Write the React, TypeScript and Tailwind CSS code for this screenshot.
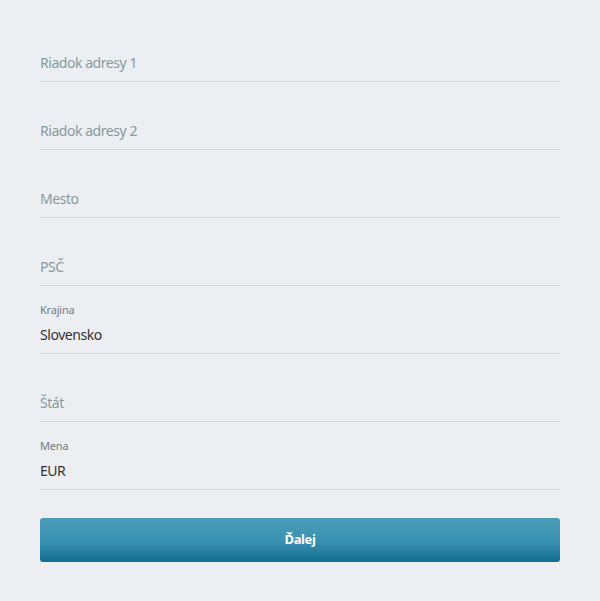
import React from 'react';

interface Field {
  label?: string;
  placeholder: string;
  value?: string;
}

const fields: Field[] = [
  { placeholder: 'Riadok adresy 1' },
  { placeholder: 'Riadok adresy 2' },
  { placeholder: 'Mesto' },
  { placeholder: 'PSČ' },
  { label: 'Krajina', placeholder: 'Krajina', value: 'Slovensko' },
  { placeholder: 'Štát' },
  { label: 'Mena', placeholder: 'Mena', value: 'EUR' },
];

export default function App() {
  return (
    <div
      className="min-h-[601px] bg-[#edeef2] px-10 pt-[14px]"
      style={{ fontFamily: '"Noto Sans", "Open Sans", sans-serif' }}
    >
      {fields.map((f) => (
        <div
          key={f.placeholder}
          className="flex h-[68px] flex-col justify-end border-b border-[#d5d8dd] pb-[6px]"
        >
          {f.label && (
            <div className="mb-[7px] text-[11px] leading-[12px] tracking-[-0.2px] text-[#6f7c82]">
              {f.label}
            </div>
          )}
          <div
            className={`text-[14px] leading-[24px] tracking-[-0.45px] ${f.value ? 'text-[#2f3437]' : 'text-[#889a9e]'}`}
          >
            {f.value ?? f.placeholder}
          </div>
        </div>
      ))}
      <button className="mt-[28px] flex h-[44px] w-full items-center justify-center rounded-[3px] bg-gradient-to-b from-[#4b9bb6] via-[#3a93b2] to-[#0f6e8e] text-[13px] font-bold tracking-[-0.4px] text-white">
        Ďalej
      </button>
    </div>
  );
}
